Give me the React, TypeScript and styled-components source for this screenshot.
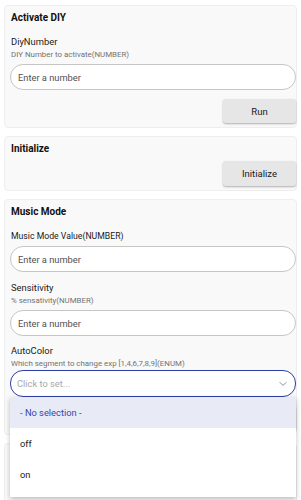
import { createGlobalStyle } from 'styled-components'
import styled from 'styled-components'
import { ChevronDown } from 'lucide-react'

const GlobalStyle = createGlobalStyle`
  body {
    margin: 0;
    background: #ffffff;
    font-family: Roboto, "Liberation Sans", sans-serif;
    color: #1d1d1d;
  }
`

const Page = styled.div`
  display: flex;
  flex-direction: column;
  gap: 8px;
  padding: 5px 4px 0 4px;
`

const Card = styled.section<{ $minHeight?: number }>`
  background: #f9f9f9;
  border: 1px solid #eeeeee;
  border-radius: 4px;
  padding: 2px 0 4px 5px;
  display: flex;
  flex-direction: column;
  min-height: ${({ $minHeight }) => $minHeight ?? 0}px;
`

const Title = styled.h3`
  margin: 0;
  font-size: 10px;
  font-weight: 700;
  line-height: 20px;
  padding-left: 1px;
  color: #111;
`

const Field = styled.div<{ $gap?: number }>`
  display: flex;
  flex-direction: column;
  margin-top: ${({ $gap }) => $gap ?? 8}px;
  position: relative;
`

const Label = styled.div<{ $size?: number }>`
  font-size: ${({ $size }) => $size ?? 9.4}px;
  line-height: 14px;
  padding-left: 1px;
  color: #1a1a1a;
`

const Hint = styled.div`
  font-size: 7.9px;
  line-height: 11px;
  padding-left: 1px;
  color: #727272;
`

const Input = styled.input<{ $gap?: number }>`
  box-sizing: border-box;
  width: 100%;
  height: 26px;
  margin-top: ${({ $gap }) => $gap ?? 4}px;
  border: 1px solid #c6c6c6;
  border-radius: 13px;
  background: #ffffff;
  padding: 0 7px;
  font-family: inherit;
  font-size: 9.3px;
  outline: none;
  &::placeholder {
    color: #505050;
  }
`

const SelectBox = styled.div`
  box-sizing: border-box;
  height: 27px;
  margin-top: 1px;
  border: 1.5px solid #2d3ea6;
  border-radius: 13px;
  background: #ffffff;
  display: flex;
  align-items: center;
  justify-content: space-between;
  padding: 0 6px 0 6px;
  font-size: 9.3px;
  color: #a8a8a8;
  svg {
    color: #666;
  }
`

const Menu = styled.ul`
  position: absolute;
  left: 0;
  right: 0;
  top: 100%;
  margin: 0;
  padding: 0 0 7px 0;
  list-style: none;
  background: #ffffff;
  box-shadow: 0 2px 5px rgba(0, 0, 0, 0.25);
  z-index: 5;
`

const MenuItem = styled.li<{ $active?: boolean }>`
  height: 31px;
  display: flex;
  align-items: center;
  padding-left: 10px;
  font-size: 9.3px;
  color: ${({ $active }) => ($active ? '#3446b0' : '#1a1a1a')};
  background: ${({ $active }) => ($active ? '#e8eaf6' : 'transparent')};
`

const Actions = styled.div<{ $gap?: number }>`
  display: flex;
  justify-content: flex-end;
  margin-top: ${({ $gap }) => $gap ?? 9}px;
`

const Button = styled.button<{ $height?: number }>`
  width: 73px;
  height: ${({ $height }) => $height ?? 24}px;
  border: none;
  border-radius: 3px;
  background: #e6e6e6;
  box-shadow: 0 1px 2px rgba(0, 0, 0, 0.3);
  font-family: inherit;
  font-size: 9.5px;
  color: #1a1a1a;
`

export default function App() {
  return (
    <>
      <GlobalStyle />
      <Page>
        <Card>
          <Title>Activate DIY</Title>
          <Field $gap={7}>
            <Label>DiyNumber</Label>
            <Hint>DIY Number to activate(NUMBER)</Hint>
            <Input placeholder="Enter a number" />
          </Field>
          <Actions>
            <Button>Run</Button>
          </Actions>
        </Card>

        <Card>
          <Title>Initialize</Title>
          <Actions $gap={2}>
            <Button $height={25}>Initialize</Button>
          </Actions>
        </Card>

        <Card>
          <Title>Music Mode</Title>
          <Field $gap={7}>
            <Label $size={8.7}>Music Mode Value(NUMBER)</Label>
            <Input placeholder="Enter a number" $gap={3} />
          </Field>
          <Field $gap={9}>
            <Label>Sensitivity</Label>
            <Hint>% sensativity(NUMBER)</Hint>
            <Input placeholder="Enter a number" />
          </Field>
          <Field $gap={8}>
            <Label>AutoColor</Label>
            <Hint>Which segment to change exp [1,4,6,7,8,9](ENUM)</Hint>
            <SelectBox>
              <span>Click to set...</span>
              <ChevronDown size={12} strokeWidth={1.5} />
            </SelectBox>
            <Menu>
              <MenuItem $active>- No selection -</MenuItem>
              <MenuItem>off</MenuItem>
              <MenuItem>on</MenuItem>
            </Menu>
          </Field>
          <Actions>
            <Button>Run</Button>
          </Actions>
        </Card>

        <Card $minHeight={60} />
      </Page>
    </>
  )
}
